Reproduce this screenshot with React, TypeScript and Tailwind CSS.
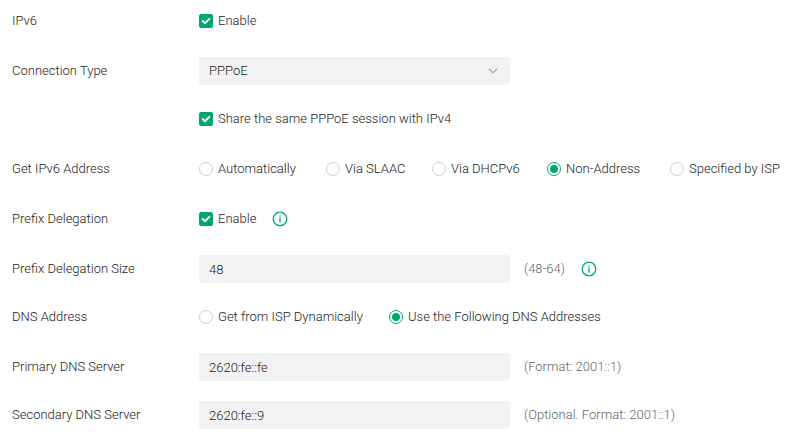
import { useState } from "react";
import type { ReactNode } from "react";

const addressModes = ["Automatically", "Via SLAAC", "Via DHCPv6", "Non-Address", "Specified by ISP"];
const dnsModes = ["Get from ISP Dynamically", "Use the Following DNS Addresses"];

const fieldClass = "h-7 w-full rounded-[3px] bg-[#f2f2f2] px-2.5 text-[13px] leading-5 text-[#222] outline-none";

function Row({ label, htmlFor, children }: { label?: string; htmlFor?: string; children: ReactNode }) {
    return (
        <div className="flex min-h-7 items-center">
            <div className="w-[187px] shrink-0">
                {label && (htmlFor ? <label htmlFor={htmlFor}>{label}</label> : <span>{label}</span>)}
            </div>
            <div className="flex min-w-0 flex-1 items-center">{children}</div>
        </div>
    );
}

function Checkbox({ label }: { label: string }) {
    const [checked, setChecked] = useState(true);

    return (
        <label className="flex items-center gap-[5px] whitespace-nowrap">
            <span className="relative flex size-3.5 shrink-0">
                <input
                    type="checkbox"
                    checked={checked}
                    onChange={e => setChecked(e.target.checked)}
                    className="size-3.5 appearance-none rounded-[2px] border border-[#cfcfcf] checked:border-[#00a870] checked:bg-[#00a870]"
                />
                {checked && (
                    <svg viewBox="0 0 14 14" className="pointer-events-none absolute inset-0 size-3.5" fill="none" stroke="white" strokeWidth="1.9">
                        <path d="M3.1 6.5 6 9.2l4.9-4.8" />
                    </svg>
                )}
            </span>
            {label}
        </label>
    );
}

function Radio({ name, label, checked, onSelect }: { name: string; label: string; checked: boolean; onSelect: () => void }) {
    return (
        <label className="flex items-center gap-[5px] whitespace-nowrap">
            <input
                type="radio"
                name={name}
                checked={checked}
                onChange={onSelect}
                className="flex size-3.5 shrink-0 appearance-none items-center justify-center rounded-full border border-[#cfcfcf] bg-white before:size-2 before:rounded-full checked:border-[#00a870] checked:before:bg-[#00a870]"
            />
            {label}
        </label>
    );
}

function InfoIcon() {
    return (
        <button type="button" aria-label="More information" className="ml-4 shrink-0">
            <svg viewBox="0 0 16 16" className="block size-4" fill="none" stroke="#00a870">
                <circle cx="8" cy="8" r="6.8" strokeWidth="1.3" />
                <path d="M8 6.8v4.6" strokeWidth="1.3" />
                <path d="M8 4.4v1.3" strokeWidth="1.3" />
            </svg>
        </button>
    );
}

function TextField({ id, initial, hint, children }: { id: string; initial: string; hint: string; children?: ReactNode }) {
    const [value, setValue] = useState(initial);

    return (
        <>
            <div className="w-full max-w-[311px]">
                <input id={id} type="text" value={value} onChange={e => setValue(e.target.value)} className={fieldClass} />
            </div>
            <span className="ml-3.5 whitespace-nowrap text-[#666]">{hint}</span>
            {children}
        </>
    );
}

export default function App() {
    const [connection, setConnection] = useState("PPPoE");
    const [addressMode, setAddressMode] = useState("Non-Address");
    const [dnsMode, setDnsMode] = useState("Use the Following DNS Addresses");

    return (
        <form className="flex flex-col gap-[22px] bg-white py-[7px] pl-3 font-['Roboto',sans-serif] text-[13px] leading-5 font-light text-[#222]">
            <Row label="IPv6">
                <Checkbox label="Enable" />
            </Row>

            <div className="flex flex-col gap-5">
                <Row label="Connection Type" htmlFor="connection">
                    <div className="relative w-full max-w-[311px]">
                        <select
                            id="connection"
                            value={connection}
                            onChange={e => setConnection(e.target.value)}
                            className={`${fieldClass} appearance-none`}
                        >
                            <option>PPPoE</option>
                        </select>
                        <svg viewBox="0 0 10 6" className="pointer-events-none absolute top-[11px] right-3 h-1.5 w-2.5" fill="none" stroke="#999">
                            <path d="M1 .8 5 4.8l4-4" strokeWidth="1.1" />
                        </svg>
                    </div>
                </Row>
                <Row>
                    <Checkbox label="Share the same PPPoE session with IPv4" />
                </Row>
            </div>

            <Row label="Get IPv6 Address">
                <div role="radiogroup" aria-label="Get IPv6 Address" className="grid grid-cols-[127px_106px_115px_123px_auto]">
                    {addressModes.map(mode => (
                        <Radio key={mode} name="address" label={mode} checked={mode === addressMode} onSelect={() => setAddressMode(mode)} />
                    ))}
                </div>
            </Row>

            <Row label="Prefix Delegation">
                <Checkbox label="Enable" />
                <InfoIcon />
            </Row>

            <div className="flex flex-col gap-5">
                <Row label="Prefix Delegation Size" htmlFor="prefix-size">
                    <TextField id="prefix-size" initial="48" hint="(48-64)">
                        <InfoIcon />
                    </TextField>
                </Row>
                <Row label="DNS Address">
                    <div role="radiogroup" aria-label="DNS Address" className="grid grid-cols-[190px_auto]">
                        {dnsModes.map(mode => (
                            <Radio key={mode} name="dns" label={mode} checked={mode === dnsMode} onSelect={() => setDnsMode(mode)} />
                        ))}
                    </div>
                </Row>
            </div>

            <div className="flex flex-col gap-5">
                <Row label="Primary DNS Server" htmlFor="primary-dns">
                    <TextField id="primary-dns" initial="2620:fe::fe" hint="(Format: 2001::1)" />
                </Row>
                <Row label="Secondary DNS Server" htmlFor="secondary-dns">
                    <TextField id="secondary-dns" initial="2620:fe::9" hint="(Optional. Format: 2001::1)" />
                </Row>
            </div>
        </form>
    );
}
